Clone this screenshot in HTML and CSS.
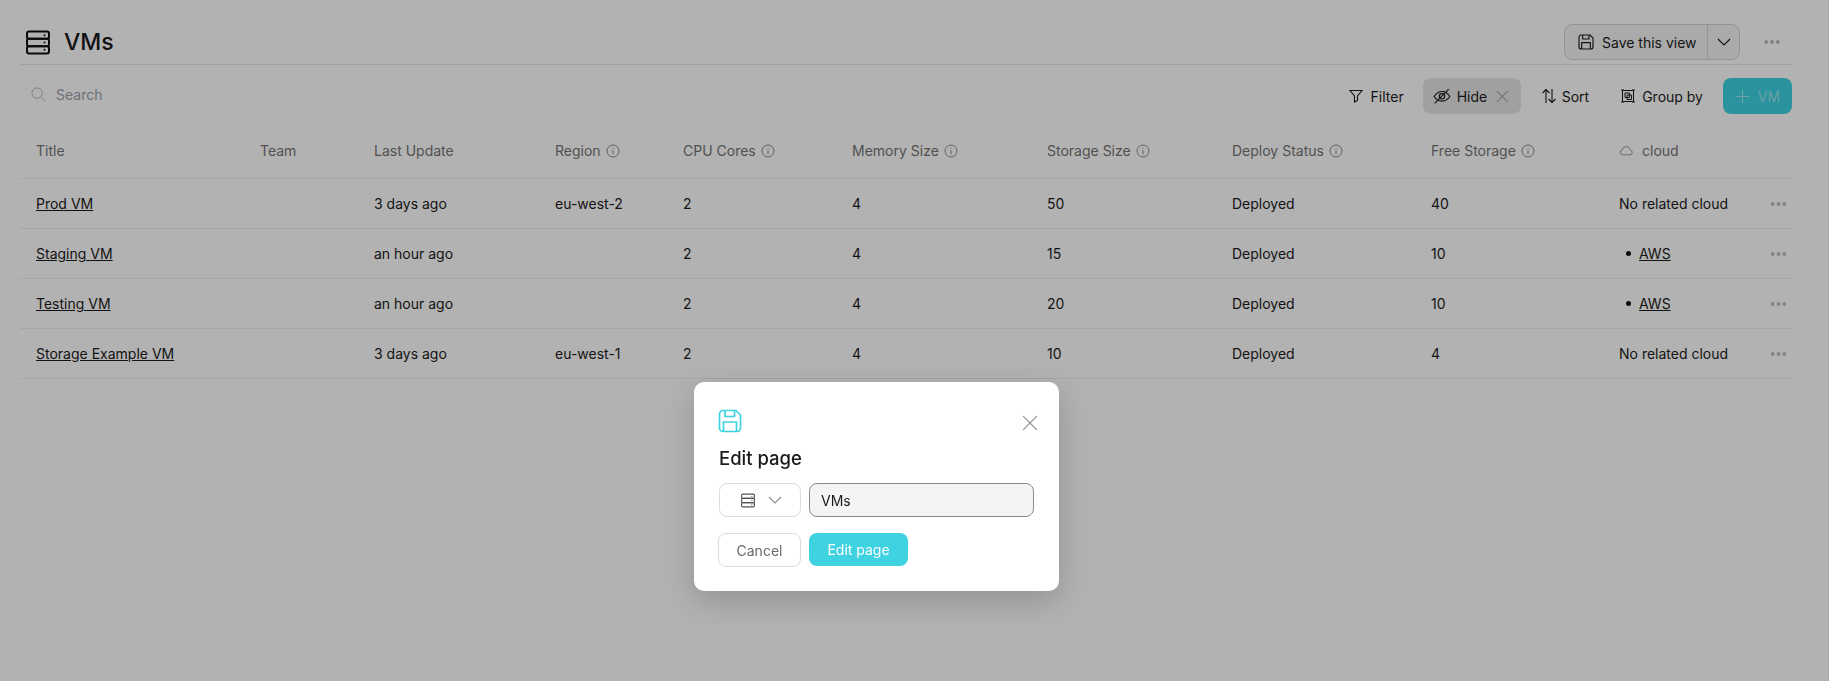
FILE: index.html
```html
<!DOCTYPE html>
<html lang="en">
<head>
<meta charset="utf-8">
<title>VMs</title>
<link rel="stylesheet" href="styles.css">
</head>
<body>
<svg class="defs" width="0" height="0" aria-hidden="true">
  <symbol id="i-info" viewBox="0 0 14 14"><circle cx="7" cy="7" r="6" fill="none" stroke="currentColor"/><path d="M7 6.200v4M7 3.800v1" fill="none" stroke="currentColor"/></symbol>
  <symbol id="i-dots" viewBox="0 0 16 4"><circle cx="2.200" cy="2" r="1.900" fill="currentColor"/><circle cx="8" cy="2" r="1.900" fill="currentColor"/><circle cx="13.800" cy="2" r="1.900" fill="currentColor"/></symbol>
  <symbol id="i-save" viewBox="0 0 24 24"><path d="M5 1.500h13l4.500 4.500V19a3.500 3.500 0 0 1-3.500 3.500H5A3.500 3.500 0 0 1 1.500 19V5A3.500 3.500 0 0 1 5 1.500Z" fill="none" stroke="currentColor" stroke-width="1.700"/><path d="M7 1.500v6h9.500v-6M5.500 22.500v-9.500h13v9.500" fill="none" stroke="currentColor" stroke-width="1.700"/></symbol>
  <symbol id="i-server" viewBox="0 0 24 24"><rect x="1" y="1" width="22" height="7.300" rx="2" fill="none" stroke="currentColor" stroke-width="2"/><rect x="1" y="8.300" width="22" height="7.400" rx="2" fill="none" stroke="currentColor" stroke-width="2"/><rect x="1" y="15.700" width="22" height="7.300" rx="2" fill="none" stroke="currentColor" stroke-width="2"/><circle cx="18.500" cy="4.700" r="1" fill="currentColor"/><circle cx="18.500" cy="12" r="1" fill="currentColor"/><circle cx="18.500" cy="19.300" r="1" fill="currentColor"/></symbol>
  <symbol id="i-chev" viewBox="0 0 14 8"><path d="M1 1l6 6 6-6" fill="none" stroke="currentColor" stroke-width="1.100"/></symbol>
  <symbol id="i-x" viewBox="0 0 14 14"><path d="M1 1l12 12M13 1L1 13" fill="none" stroke="currentColor"/></symbol>
</svg>

<div class="page">
  <header class="titlebar">
    <div class="title-left">
      <svg class="title-icon"><use href="#i-server"/></svg>
      <h1 class="page-title">VMs</h1>
    </div>
    <div class="title-right">
      <div class="save-group">
        <button class="save-main"><svg class="save-icon"><use href="#i-save"/></svg>Save this view</button>
        <button class="save-more"><svg class="save-chev"><use href="#i-chev"/></svg></button>
      </div>
      <svg class="dots-top"><use href="#i-dots"/></svg>
    </div>
  </header>

  <div class="toolbar">
    <div class="search">
      <svg class="search-icon" viewBox="0 0 16 16"><circle cx="6.500" cy="6.500" r="5.500" fill="none" stroke="currentColor"/><path d="M10.500 10.500l5 5" fill="none" stroke="currentColor"/></svg>
      <span>Search</span>
    </div>
    <div class="actions">
      <button class="tool tool-filter"><svg class="tool-icon" viewBox="0 0 14 14"><path d="M1 1.500h12L8.500 7v4.500l-3 1.500V7L1 1.500Z" fill="none" stroke="currentColor" stroke-width="1.100"/></svg>Filter</button>
      <button class="tool tool-hide"><svg class="tool-icon hide-icon" viewBox="0 0 16 14"><path d="M1 7.500c2-3 4.300-4.500 7-4.500s5 1.500 7 4.500c-2 3-4.300 4-7 4s-5-1-7-4Z" fill="none" stroke="currentColor"/><circle cx="8" cy="7.300" r="2.400" fill="none" stroke="currentColor"/><path d="M1.500 13.500L14 .8" fill="none" stroke="currentColor"/></svg>Hide<svg class="hide-x"><use href="#i-x"/></svg></button>
      <button class="tool tool-sort"><svg class="tool-icon sort-icon" viewBox="0 0 16 16"><path d="M5 15V1.500M1.500 5L5 1.500 8.500 5M11 1v13.500M7.500 11l3.500 3.500 3.500-3.500" fill="none" stroke="currentColor" stroke-width="1.100"/></svg>Sort</button>
      <button class="tool tool-group"><svg class="tool-icon" viewBox="0 0 14 14"><path d="M1.500 1.500h11v11h-11zM4 4h4.500v4.500H4zM6 6h4.500v4.500H6z" fill="none" stroke="currentColor"/><path d="M0 1h3M11 1h3M0 13h3M11 13h3" stroke="currentColor"/></svg>Group by</button>
      <button class="add-btn"><svg class="add-icon" viewBox="0 0 16 16"><path d="M8 1v14M1 8h14" fill="none" stroke="currentColor" stroke-width="1.200"/></svg>VM</button>
    </div>
  </div>

  <div class="table">
    <div class="row head">
      <div class="cell">Title</div>
      <div class="cell">Team</div>
      <div class="cell">Last Update</div>
      <div class="cell">Region<svg class="info"><use href="#i-info"/></svg></div>
      <div class="cell">CPU Cores<svg class="info"><use href="#i-info"/></svg></div>
      <div class="cell">Memory Size<svg class="info"><use href="#i-info"/></svg></div>
      <div class="cell">Storage Size<svg class="info"><use href="#i-info"/></svg></div>
      <div class="cell">Deploy Status<svg class="info"><use href="#i-info"/></svg></div>
      <div class="cell">Free Storage<svg class="info"><use href="#i-info"/></svg></div>
      <div class="cell cloud-head"><svg class="cloud-icon" viewBox="0 0 16 12"><path d="M4 11h8.500a2.800 2.800 0 0 0 .5-5.500A5 5 0 0 0 8 1.500 4.500 4.500 0 0 0 3.800 5.300 2.900 2.900 0 0 0 4 11Z" fill="none" stroke="currentColor"/></svg>cloud</div>
    </div>
    <div class="row">
      <div class="cell"><a class="link" href="#">Prod VM</a></div><div class="cell"></div>
      <div class="cell">3 days ago</div><div class="cell">eu-west-2</div><div class="cell">2</div><div class="cell">4</div><div class="cell">50</div><div class="cell">Deployed</div><div class="cell">40</div>
      <div class="cell last">No related cloud<svg class="dots-row"><use href="#i-dots"/></svg></div>
    </div>
    <div class="row">
      <div class="cell"><a class="link" href="#">Staging VM</a></div><div class="cell"></div>
      <div class="cell">an hour ago</div><div class="cell"></div><div class="cell">2</div><div class="cell">4</div><div class="cell">15</div><div class="cell">Deployed</div><div class="cell">10</div>
      <div class="cell last"><span class="rel"><i class="bullet"></i><a class="link" href="#">AWS</a></span><svg class="dots-row"><use href="#i-dots"/></svg></div>
    </div>
    <div class="row">
      <div class="cell"><a class="link" href="#">Testing VM</a></div><div class="cell"></div>
      <div class="cell">an hour ago</div><div class="cell"></div><div class="cell">2</div><div class="cell">4</div><div class="cell">20</div><div class="cell">Deployed</div><div class="cell">10</div>
      <div class="cell last"><span class="rel"><i class="bullet"></i><a class="link" href="#">AWS</a></span><svg class="dots-row"><use href="#i-dots"/></svg></div>
    </div>
    <div class="row">
      <div class="cell"><a class="link" href="#">Storage Example VM</a></div><div class="cell"></div>
      <div class="cell">3 days ago</div><div class="cell">eu-west-1</div><div class="cell">2</div><div class="cell">4</div><div class="cell">10</div><div class="cell">Deployed</div><div class="cell">4</div>
      <div class="cell last">No related cloud<svg class="dots-row"><use href="#i-dots"/></svg></div>
    </div>
  </div>
</div>

<div class="overlay"></div>

<div class="modal">
  <div class="modal-top">
    <svg class="modal-icon"><use href="#i-save"/></svg>
    <svg class="modal-close"><use href="#i-x"/></svg>
  </div>
  <h2 class="modal-title">Edit page</h2>
  <div class="modal-fields">
    <button class="icon-select"><svg class="select-icon"><use href="#i-server"/></svg><svg class="select-chev"><use href="#i-chev"/></svg></button>
    <div class="name-input">VMs</div>
  </div>
  <div class="modal-buttons">
    <button class="btn-cancel">Cancel</button>
    <button class="btn-edit">Edit page</button>
  </div>
</div>
</body>
</html>
```
FILE: styles.css
```css
* { box-sizing: border-box; }
html, body { margin: 0; height: 100%; }
body { background: #fff; font-family: Inter, "Liberation Sans", sans-serif; font-size: 14px; color: #1c1c1c; overflow: hidden; }
button { font: inherit; color: inherit; background: none; border: 0; padding: 0; }
.defs { position: absolute; }
.page { padding: 0 37px 0 20px; }

.titlebar { height: 65px; border-bottom: 1px solid #e4e7ec; display: flex; justify-content: space-between; align-items: flex-start; padding-top: 24px; }
.title-left { display: flex; align-items: center; padding-left: 6px; gap: 14px; height: 36px; }
.title-icon { width: 24px; height: 25px; color: #111; }
.page-title { margin: 0; font-family: Inter, "Liberation Sans", sans-serif; font-weight: 500; font-size: 23px; color: #1a1a1a; }
.title-right { display: flex; align-items: center; }
.save-group { display: flex; height: 36px; border: 1px solid #d4d4d4; border-radius: 8px; background: #f4f4f4; }
.save-main { display: flex; align-items: center; gap: 8px; padding: 0 0 0 13px; width: 143px; border-right: 1px solid #d4d4d4; white-space: nowrap; }
.save-icon { width: 16px; height: 16px; flex: none; }
.save-more { width: 31px; display: flex; align-items: center; justify-content: center; }
.save-chev { width: 14px; height: 8px; }
.dots-top { width: 16px; height: 4px; margin: 0 12px 0 24px; color: #b8b8b8; }

.toolbar { display: flex; justify-content: space-between; align-items: center; height: 36px; margin-top: 13px; }
.search { display: flex; align-items: center; gap: 10px; padding-left: 11px; padding-bottom: 4px; color: #98a1ad; }
.search-icon { width: 15px; height: 15px; color: #b4b4b4; }
.actions { display: flex; align-items: center; }
.tool { height: 36px; display: flex; align-items: center; gap: 6px; white-space: nowrap; border-radius: 8px; }
.tool-icon { width: 14px; height: 14px; flex: none; }
.tool-filter { gap: 8px; margin-right: 19px; }
.tool-hide { background: #e5e5e5; padding: 0 12px 0 10px; gap: 6px; margin-right: 20px; width: 98px; }
.hide-icon { width: 18px; height: 16px; }
.hide-x { width: 13px; height: 13px; margin-left: 3px; color: #7e7e7e; }
.sort-icon { width: 16px; height: 16px; }
.tool-sort { gap: 5px; margin-right: 32px; }
.tool-group { gap: 7px; margin-right: 20px; }
.add-btn { width: 69px; height: 36px; border-radius: 8px; background: #3ed3e1; color: #95e6ee; display: flex; align-items: center; justify-content: center; gap: 8px; }
.add-icon { width: 15px; height: 15px; color: #9ce9f0; }

.table { margin-top: 15px; }
.row { display: grid; grid-template-columns: 224px 114px 181px 128px 169px 195px 185px 199px 188px 1fr; height: 50px; border-bottom: 1px solid #f0f0f0; }
.row.head { height: 50px; color: #757575; }
.row.head .cell { padding-bottom: 6px; }
.cell { display: flex; align-items: center; padding-left: 16px; white-space: nowrap; }
.info { width: 14px; height: 14px; margin-left: 5px; color: #8c8c8c; }
.cloud-icon { width: 14px; height: 11px; margin-right: 9px; color: #8c8c8c; }
.last { justify-content: space-between; padding-right: 5px; }
.link { color: inherit; text-decoration: underline; }
.rel { display: flex; align-items: center; gap: 8px; padding-left: 7px; }
.bullet { width: 5px; height: 5px; border-radius: 50%; background: #111; }
.dots-row { width: 17px; height: 4px; color: #bdbdbd; }

.overlay { position: fixed; inset: 0; background: rgba(0, 0, 0, .3); border-right: 1px solid rgba(0, 0, 0, .06); }

.modal { position: absolute; left: 694px; top: 382px; width: 365px; height: 209px; background: #fff; border-radius: 10px; padding: 27px 24px 0; box-shadow: 0 10px 30px rgba(0, 0, 0, .18); }
.modal-top { display: flex; justify-content: space-between; align-items: flex-start; height: 24px; }
.modal-icon { width: 24px; height: 24px; color: #3fd2e0; }
.modal-close { width: 16px; height: 16px; margin: 6px -3px 0 0; color: #8c8c8c; }
.modal-title { margin: 13px 0 0 1px; font-family: Inter, "Liberation Sans", sans-serif; font-weight: 500; font-size: 18.500px; line-height: 24px; color: #1a1a1a; }
.modal-fields { display: flex; gap: 8px; margin-top: 13px; padding-left: 1px; }
.icon-select { width: 82px; height: 34px; border: 1px solid #dcdcdc; border-radius: 8px; display: flex; align-items: center; justify-content: center; gap: 13px; padding-left: 3px; }
.select-icon { width: 14px; height: 15px; color: #555; }
.select-chev { width: 14px; height: 8px; color: #8a8a8a; }
.name-input { width: 225px; height: 34px; border: 1px solid #8a8a8a; border-radius: 8px; background: #f4f4f4; display: flex; align-items: center; padding-left: 11px; color: #1a1a1a; }
.modal-buttons { display: flex; gap: 8px; margin-top: 16px; }
.btn-cancel { width: 83px; height: 34px; border: 1px solid #dcdcdc; border-radius: 8px; background: #fff; color: #6b6b6b; }
.btn-edit { width: 99px; height: 33px; border-radius: 8px; background: #3fd2e0; color: #fff; }
```
